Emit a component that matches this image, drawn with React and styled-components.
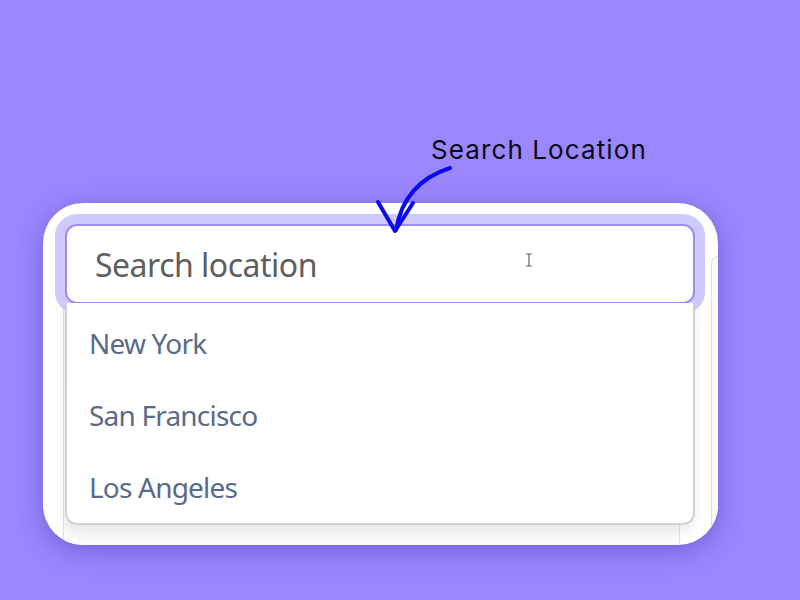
import React from "react";
import styled, { createGlobalStyle } from "styled-components";

const Global = createGlobalStyle`
  html, body { margin: 0; padding: 0; }
  body {
    background: #9b86fd;
    width: 800px;
    height: 600px;
    overflow: hidden;
  }
`;

const Page = styled.div`
  width: 800px;
  height: 600px;
  display: flex;
  flex-direction: column;
  padding: 130px 0 0 43px;
  box-sizing: border-box;
  position: relative;
`;

const Caption = styled.div`
  margin-left: 388px;
  height: 40px;
  font-family: "Inter", "Noto Sans", sans-serif;
  font-size: 26px;
  font-weight: 400;
  color: #0a0a14;
  letter-spacing: 1.1px;
  line-height: 40px;
`;

const ArrowSvg = styled.svg`
  position: absolute;
  left: 370px;
  top: 160px;
  overflow: visible;
  z-index: 5;
`;

const Card = styled.div`
  margin-top: 33px;
  width: 675px;
  height: 342px;
  background: #ffffff;
  border-radius: 40px;
  overflow: hidden;
  box-shadow: 0 6px 24px rgba(70, 50, 170, 0.45);
  display: flex;
  position: relative;
  box-sizing: border-box;
  padding: 21px 0 0 22px;
  gap: 16px;
`;

const Column = styled.div`
  width: 630px;
  display: flex;
  flex-direction: column;
  position: relative;
`;

const Field = styled.div`
  position: relative;
  z-index: 2;
`;

const Input = styled.div`
  height: 80px;
  box-sizing: border-box;
  border: 2px solid #9a8ef4;
  border-radius: 12px;
  background: #fff;
  box-shadow: 0 0 0 10px #cfcafd;
  display: flex;
  align-items: center;
  padding-left: 28px;
  font-family: "Noto Sans", "Open Sans", sans-serif;
  font-size: 32px;
  color: #5e5e5e;
  letter-spacing: -0.5px;
`;

const Caret = styled.svg`
  position: absolute;
  left: 460px;
  top: 29px;
`;

const Menu = styled.ul`
  position: absolute;
  top: 79px;
  left: 0;
  right: 0;
  margin: 0;
  list-style: none;
  background: #fff;
  border: 2px solid #d2d2d2;
  border-top: none;
  border-radius: 0 0 12px 12px;
  box-shadow: 0 6px 12px rgba(0, 0, 0, 0.08);
  height: 222px;
  box-sizing: border-box;
  padding: 4px 0 0;
  z-index: 3;
`;

const Item = styled.li`
  padding-left: 22px;
  font-family: "Noto Sans", "Open Sans", sans-serif;
  font-size: 28px;
  color: #5a6a89;
  letter-spacing: -0.8px;
  line-height: 72px;
  height: 72px;
`;

const BackPanel = styled.div`
  margin-left: -2px;
  width: 615px;
  flex: 1;
  border-left: 1px solid #e2e2e2;
  border-right: 1px solid #e2e2e2;
  background: linear-gradient(#f3f3f3, #fafafa);
`;

const Peek = styled.div`
  margin-top: 32px;
  flex: 1;
  border: 1px solid #e0e0e0;
  border-right: none;
  border-radius: 10px 0 0 0;
  background: #fafafa;
`;

export default function App() {
  const cities = ["New York", "San Francisco", "Los Angeles"];
  return (
    <>
      <Global />
      <Page>
        <Caption>Search Location</Caption>
        <ArrowSvg width="90" height="80" viewBox="0 0 90 80">
          <path
            d="M80 8 C 55 16, 32 34, 26 70"
            fill="none"
            stroke="#0a0af0"
            strokeWidth="4"
            strokeLinecap="round"
          />
          <path
            d="M8 42 L25 71 L43 43"
            fill="none"
            stroke="#0a0af0"
            strokeWidth="4"
            strokeLinecap="round"
            strokeLinejoin="round"
          />
        </ArrowSvg>
        <Card>
          <Column>
            <Field>
              <Input>Search location</Input>
              <Caret width="8" height="14" viewBox="0 0 8 14">
                <path d="M1 1 H7 M4 1 V13 M1 13 H7" stroke="#666" strokeWidth="1.2" fill="none" />
              </Caret>
              <Menu>
                {cities.map((c) => (
                  <Item key={c}>{c}</Item>
                ))}
              </Menu>
            </Field>
            <BackPanel />
          </Column>
          <Peek />
        </Card>
      </Page>
    </>
  );
}
